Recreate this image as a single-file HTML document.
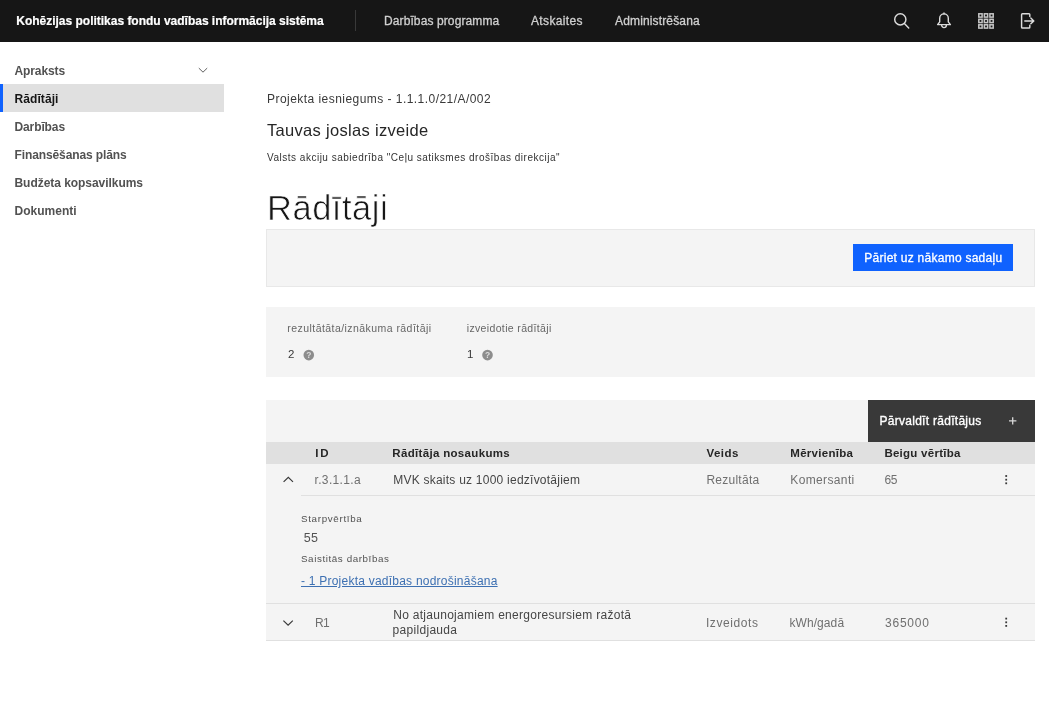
<!DOCTYPE html>
<html lang="lv">
<head>
<meta charset="utf-8">
<title>Rādītāji</title>
<style>
*{box-sizing:border-box;margin:0;padding:0}
html,body{width:1049px;height:701px;overflow:hidden;background:#fff}
body{font-family:"Liberation Sans",sans-serif;color:#161616;position:relative;font-size:12px}
.b{position:absolute}
.t{position:absolute;white-space:nowrap;line-height:20px;height:20px;}
svg{position:absolute;overflow:visible}
</style>
</head>
<body>
<!-- header -->
<div class="b" style="left:0;top:0;width:1049px;height:42px;background:#161616"></div>
<div class="b" style="left:355px;top:10px;width:1px;height:21px;background:#393939"></div>
<!-- sidebar active -->
<div class="b" style="left:0;top:84px;width:224px;height:28px;background:#e0e0e0"></div>
<div class="b" style="left:0;top:84px;width:3.3px;height:28px;background:#0f62fe"></div>
<!-- action bar -->
<div class="b" style="left:266px;top:229px;width:769px;height:58px;background:#f4f4f4;border:1px solid #e8e8e8"></div>
<div class="b" style="left:853px;top:243.5px;width:159.8px;height:27.5px;background:#0f62fe"></div>
<!-- stats -->
<div class="b" style="left:266px;top:307.2px;width:769px;height:69.4px;background:#f4f4f4"></div>
<!-- table -->
<div class="b" style="left:266px;top:399.5px;width:769px;height:42.5px;background:#f4f4f4"></div>
<div class="b" style="left:868px;top:399.5px;width:167px;height:42px;background:#393939"></div>
<div class="b" style="left:266px;top:441.7px;width:769px;height:22px;background:#e0e0e0"></div>
<div class="b" style="left:266px;top:463.5px;width:769px;height:177px;background:#f4f4f4"></div>
<div class="b" style="left:301px;top:495px;width:734px;height:1px;background:#e0e0e0"></div>
<div class="b" style="left:266px;top:603px;width:769px;height:1px;background:#e0e0e0"></div>
<div class="b" style="left:266px;top:640px;width:769px;height:1px;background:#e0e0e0"></div>

<div class="b" style="left:0;top:0;width:1049px;height:701px;will-change:opacity">
<!-- header icons -->
<svg style="left:890px;top:10px" width="24" height="24" viewBox="890 10 24 24" fill="none" stroke="#dcdcdc" stroke-width="1.45">
  <circle cx="900.3" cy="19.4" r="5.6"/><path d="M904.4 23.6 L908.7 27.9" stroke-linecap="round"/>
</svg>
<svg style="left:932px;top:10px" width="24" height="24" viewBox="932 10 24 24" fill="none" stroke="#dcdcdc" stroke-width="1.4" stroke-linejoin="round">
  <path d="M937.6 24.6 L939.7 21.9 V18.2 A4.3 4.3 0 0 1 948.3 18.2 V21.9 L950.4 24.6 Z"/>
  <path d="M941.6 25 A2.4 2.6 0 0 0 946.4 25"/>
  <path d="M944 13.9 V13" stroke-linecap="round"/>
</svg>
<svg style="left:976px;top:10px" width="24" height="24" viewBox="976 10 24 24" fill="none" stroke="#c6c6c6" stroke-width="1.5">
  <g id="gr"><rect x="978.8" y="13.8" width="3.3" height="3.3"/><rect x="984.35" y="13.8" width="3.3" height="3.3"/><rect x="989.9" y="13.8" width="3.3" height="3.3"/></g>
  <g transform="translate(0 5.5)"><rect x="978.8" y="13.8" width="3.3" height="3.3"/><rect x="984.35" y="13.8" width="3.3" height="3.3"/><rect x="989.9" y="13.8" width="3.3" height="3.3"/></g>
  <g transform="translate(0 11)"><rect x="978.8" y="13.8" width="3.3" height="3.3"/><rect x="984.35" y="13.8" width="3.3" height="3.3"/><rect x="989.9" y="13.8" width="3.3" height="3.3"/></g>
</svg>
<svg style="left:1016px;top:10px" width="24" height="24" viewBox="1016 10 24 24" fill="none" stroke="#dcdcdc" stroke-width="1.45" stroke-linejoin="round" stroke-linecap="round">
  <path d="M1029.8 16.6 V14.6 Q1029.8 13.8 1029 13.8 H1022.4 Q1021.6 13.8 1021.6 14.6 V27.2 Q1021.6 28 1022.4 28 H1029 Q1029.8 28 1029.8 27.2 V25.2"/>
  <path d="M1024.8 20.9 H1033.6 M1030.8 18 L1033.8 20.9 L1030.8 23.8"/>
</svg>
<!-- sidebar chevron -->
<svg style="left:196px;top:62px" width="16" height="16" viewBox="196 62 16 16" fill="none" stroke="#5f5f5f" stroke-width="1">
  <path d="M198.8 68.1 L203 72.2 L207.2 68.1"/>
</svg>
<!-- help icons -->
<svg style="left:302px;top:348px" width="14" height="14" viewBox="302 348 14 14">
  <circle cx="308.8" cy="355.1" r="5.3" fill="#8d8d8d"/>
  <text x="308.8" y="358.3" font-family="Liberation Sans, sans-serif" font-size="8.5" font-weight="700" fill="#dcdcdc" text-anchor="middle">?</text>
</svg>
<svg style="left:481px;top:348px" width="14" height="14" viewBox="481 348 14 14">
  <circle cx="487.5" cy="355.1" r="5.3" fill="#8d8d8d"/>
  <text x="487.5" y="358.3" font-family="Liberation Sans, sans-serif" font-size="8.5" font-weight="700" fill="#dcdcdc" text-anchor="middle">?</text>
</svg>
<!-- plus -->
<svg style="left:1005px;top:413px" width="16" height="16" viewBox="1005 413 16 16" fill="none" stroke="#d8d8d8" stroke-width="1.3">
  <path d="M1009 420.8 H1016.4 M1012.7 417.2 V424.4"/>
</svg>
<!-- row chevrons -->
<svg style="left:280px;top:472px" width="16" height="16" viewBox="280 472 16 16" fill="none" stroke="#393939" stroke-width="1.2">
  <path d="M283.6 481.9 L288.3 477.3 L293 481.9"/>
</svg>
<svg style="left:280px;top:615px" width="16" height="16" viewBox="280 615 16 16" fill="none" stroke="#393939" stroke-width="1.2">
  <path d="M283.4 620.6 L288.1 625.2 L292.8 620.6"/>
</svg>
<!-- overflow -->
<svg style="left:1000px;top:472px" width="12" height="16" viewBox="1000 472 12 16" fill="#393939">
  <rect x="1005.3" y="475.1" width="1.8" height="1.8"/><rect x="1005.3" y="478.8" width="1.8" height="1.8"/><rect x="1005.3" y="482.4" width="1.8" height="1.8"/>
</svg>
<svg style="left:1000px;top:615px" width="12" height="16" viewBox="1000 615 12 16" fill="#393939">
  <rect x="1005.3" y="617.7" width="1.8" height="1.8"/><rect x="1005.3" y="621.4" width="1.8" height="1.8"/><rect x="1005.3" y="625" width="1.8" height="1.8"/>
</svg>
<header role="banner">
<span class="t" style="left:16.30px;top:11.30px;font-size:12px;font-weight:700;color:#ffffff;letter-spacing:-0.014px;-webkit-text-stroke:0.2px #fff;">Kohēzijas politikas fondu vadības informācija sistēma</span>
<span class="t" style="left:384.00px;top:11.30px;font-size:12px;font-weight:400;color:#d0d0d0;letter-spacing:0.106px;-webkit-text-stroke:0.3px #d0d0d0;">Darbības programma</span>
<span class="t" style="left:531.00px;top:11.30px;font-size:12px;font-weight:400;color:#d0d0d0;letter-spacing:0.352px;-webkit-text-stroke:0.3px #d0d0d0;">Atskaites</span>
<span class="t" style="left:615.00px;top:11.30px;font-size:12px;font-weight:400;color:#d0d0d0;letter-spacing:0.151px;-webkit-text-stroke:0.3px #d0d0d0;">Administrēšana</span>
</header>
<nav aria-label="Sadaļas">
<span class="t" style="left:14.50px;top:60.60px;font-size:12px;font-weight:700;color:#525252;letter-spacing:-0.112px;">Apraksts</span>
<span class="t" style="left:14.50px;top:88.60px;font-size:12px;font-weight:700;color:#161616;letter-spacing:0.085px;">Rādītāji</span>
<span class="t" style="left:14.50px;top:116.60px;font-size:12px;font-weight:700;color:#525252;letter-spacing:-0.111px;">Darbības</span>
<span class="t" style="left:14.50px;top:144.60px;font-size:12px;font-weight:700;color:#525252;letter-spacing:-0.110px;">Finansēšanas plāns</span>
<span class="t" style="left:14.50px;top:172.60px;font-size:12px;font-weight:700;color:#525252;letter-spacing:-0.047px;">Budžeta kopsavilkums</span>
<span class="t" style="left:14.50px;top:200.60px;font-size:12px;font-weight:700;color:#525252;letter-spacing:0.016px;">Dokumenti</span>
</nav>
<section class="g" aria-label="Projekts">
<span class="t" style="left:267.00px;top:89.30px;font-size:12px;font-weight:400;color:#393939;letter-spacing:0.456px;">Projekta iesniegums - 1.1.1.0/21/A/002</span>
<span class="t" style="left:267.00px;top:119.80px;font-size:16.5px;font-weight:400;color:#262626;letter-spacing:0.309px;">Tauvas joslas izveide</span>
<span class="t" style="left:267.00px;top:147.50px;font-size:10px;font-weight:400;color:#333333;letter-spacing:0.508px;">Valsts akciju sabiedrība "Ceļu satiksmes drošības direkcija"</span>
<span class="t" style="left:267.00px;top:198.00px;font-size:34.5px;font-weight:400;color:#161616;letter-spacing:0.527px;-webkit-text-stroke:0.7px #fff;">Rādītāji</span>
</section>
<section class="g" aria-label="Darbības josla">
<span class="t" style="left:864.30px;top:247.80px;font-size:12px;font-weight:400;color:#ffffff;letter-spacing:0.259px;-webkit-text-stroke:0.3px #fff;">Pāriet uz nākamo sadaļu</span>
</section>
<section class="g" aria-label="Kopsavilkums">
<span class="t" style="left:287.30px;top:318.00px;font-size:10.5px;font-weight:400;color:#666666;letter-spacing:0.443px;">rezultātāta/iznākuma rādītāji</span>
<span class="t" style="left:466.70px;top:318.00px;font-size:10.5px;font-weight:400;color:#666666;letter-spacing:0.357px;">izveidotie rādītāji</span>
<span class="t" style="left:288.00px;top:344.40px;font-size:11.5px;font-weight:400;color:#393939;letter-spacing:0.000px;">2</span>
<span class="t" style="left:467.00px;top:344.40px;font-size:11.5px;font-weight:400;color:#393939;letter-spacing:0.000px;">1</span>
</section>
<div class="g" role="toolbar">
<span class="t" style="left:879.40px;top:411.00px;font-size:12px;font-weight:400;color:#ffffff;letter-spacing:0.288px;-webkit-text-stroke:0.35px #fff;">Pārvaldīt rādītājus</span>
</div>
<div class="g" role="row" aria-label="Galvene">
<span class="t" style="left:315.30px;top:442.80px;font-size:11.5px;font-weight:700;color:#262626;letter-spacing:1.805px;">ID</span>
<span class="t" style="left:392.30px;top:442.80px;font-size:11.5px;font-weight:700;color:#262626;letter-spacing:0.327px;">Rādītāja nosaukums</span>
<span class="t" style="left:706.40px;top:442.80px;font-size:11.5px;font-weight:700;color:#262626;letter-spacing:0.487px;">Veids</span>
<span class="t" style="left:790.30px;top:442.80px;font-size:11.5px;font-weight:700;color:#262626;letter-spacing:0.291px;">Mērvienība</span>
<span class="t" style="left:884.40px;top:442.80px;font-size:11.5px;font-weight:700;color:#262626;letter-spacing:0.262px;">Beigu vērtība</span>
</div>
<div class="g" role="row">
<span class="t" style="left:314.50px;top:469.60px;font-size:12px;font-weight:400;color:#6f6f6f;letter-spacing:0.351px;">r.3.1.1.a</span>
<span class="t" style="left:393.20px;top:469.60px;font-size:12px;font-weight:400;color:#454545;letter-spacing:0.238px;">MVK skaits uz 1000 iedzīvotājiem</span>
<span class="t" style="left:706.40px;top:469.60px;font-size:12px;font-weight:400;color:#6f6f6f;letter-spacing:0.260px;">Rezultāta</span>
<span class="t" style="left:790.30px;top:469.60px;font-size:12px;font-weight:400;color:#6f6f6f;letter-spacing:0.364px;">Komersanti</span>
<span class="t" style="left:884.40px;top:469.60px;font-size:12px;font-weight:400;color:#6f6f6f;letter-spacing:-0.374px;">65</span>
</div>
<div class="g" role="region" aria-label="Detaļas">
<span class="t" style="left:301.00px;top:508.60px;font-size:9.8px;font-weight:400;color:#525252;letter-spacing:0.671px;">Starpvērtība</span>
<span class="t" style="left:303.80px;top:527.60px;font-size:12.5px;font-weight:400;color:#525252;letter-spacing:0.248px;">55</span>
<span class="t" style="left:301.00px;top:548.80px;font-size:9.8px;font-weight:400;color:#525252;letter-spacing:0.590px;">Saistitās darbības</span>
<a class="t" style="left:301.00px;top:571.00px;font-size:12px;font-weight:400;color:#3d70b2;letter-spacing:0.230px;text-decoration:underline;">- 1 Projekta vadības nodrošināšana</a>
</div>
<div class="g" role="row">
<span class="t" style="left:315.00px;top:612.50px;font-size:12px;font-weight:400;color:#6f6f6f;letter-spacing:-0.666px;">R1</span>
<span class="t" style="left:393.20px;top:604.80px;font-size:12px;font-weight:400;color:#454545;letter-spacing:0.289px;">No atjaunojamiem energoresursiem ražotā</span>
<span class="t" style="left:392.60px;top:620.10px;font-size:12px;font-weight:400;color:#454545;letter-spacing:0.299px;">papildjauda</span>
<span class="t" style="left:705.90px;top:612.50px;font-size:12px;font-weight:400;color:#6f6f6f;letter-spacing:0.593px;">Izveidots</span>
<span class="t" style="left:789.40px;top:612.50px;font-size:12px;font-weight:400;color:#6f6f6f;letter-spacing:0.092px;">kWh/gadā</span>
<span class="t" style="left:885.00px;top:612.50px;font-size:12px;font-weight:400;color:#6f6f6f;letter-spacing:0.766px;">365000</span>
</div>
</div>
</body>
</html>
